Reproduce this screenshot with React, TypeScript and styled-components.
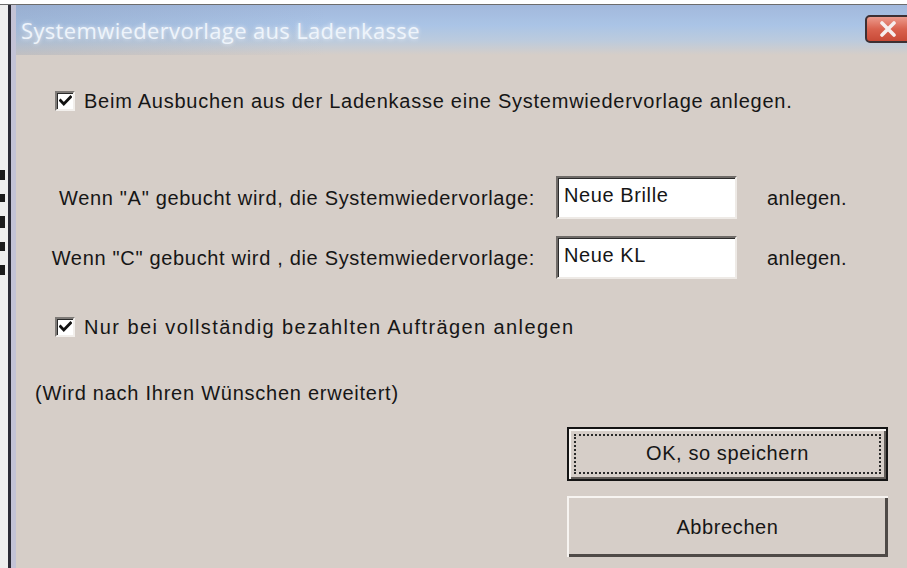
import React from "react";
import styled, { createGlobalStyle } from "styled-components";

const Global = createGlobalStyle`
  html, body {
    margin: 0;
    padding: 0;
    background: #ffffff;
    overflow: hidden;
  }
  #root {
    width: 907px;
    height: 568px;
  }
`;

const UI_FONT = `"Liberation Sans", Arial, sans-serif`;

const Screen = styled.div`
  width: 907px;
  height: 568px;
  display: flex;
  flex-direction: column;
  overflow: hidden;
  background: #f4f4f4;
`;

const TopStrip = styled.div`
  height: 4px;
  flex: none;
  background: #ffffff;
  border-bottom: 1px solid #6c6c6c;
`;

const Body = styled.div`
  flex: 1;
  display: flex;
  min-height: 0;
`;

const Backdrop = styled.div`
  width: 8px;
  flex: none;
  display: flex;
  flex-direction: column;
  background: #eeeeee;
  padding-top: 165px;
  gap: 14px;
`;

const Mark = styled.span<{ $h: number }>`
  display: block;
  width: 5px;
  height: ${(p) => p.$h}px;
  background: #1c1c1c;
`;

const Window = styled.div`
  flex: 1;
  display: flex;
  flex-direction: column;
  border-left: 3px solid #2a2a35;
  background: #d6cec8;
  min-width: 0;
`;

const Frame = styled.div`
  flex: 1;
  display: flex;
  flex-direction: column;
  border-left: 5px solid #c3c3d6;
  min-height: 0;
`;

const TitleBar = styled.div`
  height: 50px;
  flex: none;
  display: flex;
  align-items: flex-start;
  justify-content: space-between;
  background:
    linear-gradient(90deg, rgba(120, 140, 170, 0.22) 0%, rgba(255, 255, 255, 0) 35%, rgba(255, 255, 255, 0) 100%),
    linear-gradient(180deg, #a2b8dc 0%, #aac4e6 40%, #bccbdd 72%, #d6cec8 100%);
`;

const Title = styled.span`
  margin: 12px 0 0 5px;
  font-family: "Open Sans", "Noto Sans", sans-serif;
  font-size: 22px;
  line-height: 26px;
  color: #eef4fb;
  text-shadow: 0 0 4px rgba(255, 255, 255, 0.75);
  letter-spacing: 0.35px;
`;

const CloseButton = styled.div`
  margin-top: 10px;
  width: 46px;
  height: 28px;
  margin-right: -4px;
  border: 2px solid #3d3033;
  border-radius: 5px;
  background: linear-gradient(180deg, #ec9a8c 0%, #d9624f 50%, #c84a37 100%);
  display: flex;
  align-items: center;
  justify-content: center;
  box-sizing: border-box;
`;

const Content = styled.div`
  flex: 1;
  display: flex;
  flex-direction: column;
  font-family: ${UI_FONT};
  font-size: 20px;
  line-height: 22px;
  color: #161616;
`;

const CheckRow = styled.label<{ $top: number; $track: number }>`
  display: flex;
  align-items: center;
  gap: 9px;
  margin: ${(p) => p.$top}px 0 0 39px;
  height: 22px;
  letter-spacing: ${(p) => p.$track}px;
`;

const CheckBox = styled.span`
  width: 20px;
  height: 20px;
  box-sizing: border-box;
  flex: none;
  background: #ffffff;
  border-top: 2px solid #7e7a77;
  border-left: 2px solid #7e7a77;
  border-right: 2px solid #f2efec;
  border-bottom: 2px solid #f2efec;
  box-shadow: inset 1px 1px 0 #2a2a2a;
  display: flex;
  align-items: center;
  justify-content: center;
`;

const Fields = styled.div`
  display: grid;
  grid-template-columns: 519px 181px auto;
  row-gap: 17px;
  align-items: center;
  margin-top: 64px;
  letter-spacing: 0.68px;
`;

const FieldLabel = styled.span`
  text-align: right;
  white-space: nowrap;
`;

const TextBox = styled.div`
  grid-column: 2;
  height: 43px;
  margin-left: 21px;
  width: 181px;
  box-sizing: border-box;
  background: #ffffff;
  border-top: 2px solid #6f6b68;
  border-left: 2px solid #6f6b68;
  border-right: 2px solid #eeeae6;
  border-bottom: 2px solid #eeeae6;
  box-shadow: inset 1px 1px 0 #2b2b2b;
  padding: 0 0 6px 6px;
  display: flex;
  align-items: center;
  letter-spacing: 0.6px;
`;

const After = styled.span`
  margin-left: 51px;
  letter-spacing: 0.4px;
`;

const Note = styled.div`
  margin: 44px 0 0 19px;
  letter-spacing: 0.75px;
`;

const Buttons = styled.div`
  display: flex;
  flex-direction: column;
  align-items: flex-start;
  gap: 15px;
  margin: 23px 0 0 551px;
`;

const Button = styled.div<{ $default?: boolean }>`
  width: 321px;
  height: ${(p) => (p.$default ? 54 : 61)}px;
  box-sizing: border-box;
  background: #d6cec8;
  border: ${(p) => (p.$default ? "2px solid #141414" : "none")};
  box-shadow: ${(p) =>
    p.$default
      ? "inset 2px 2px 0 #f7f4f1, inset -2px -2px 0 #625d59"
      : "inset 2px 2px 0 #f7f4f1, inset -3px -3px 0 #4f4a47"};
  display: flex;
  align-items: center;
  justify-content: center;
  padding: ${(p) => (p.$default ? 5 : 0)}px;
  letter-spacing: 0.6px;
`;

const Focus = styled.div`
  flex: 1;
  align-self: stretch;
  border: 2px dotted #2a2a2a;
  display: flex;
  align-items: center;
  justify-content: center;
  padding-bottom: 3px;
`;

const Tick = () => (
  <svg width="13" height="12" viewBox="0 0 13 12">
    <path d="M1.5 5.5 L4.8 9 L11.5 2" fill="none" stroke="#111" strokeWidth="2.8" strokeLinecap="square" />
  </svg>
);

const CrossGlyph = () => (
  <svg width="20" height="16" viewBox="0 0 20 16">
    <path d="M4 2 L16 14 M16 2 L4 14" stroke="#f6eeee" strokeWidth="3.6" strokeLinecap="round" />
  </svg>
);

export default function App() {
  return (
    <>
      <Global />
      <Screen>
        <TopStrip />
        <Body>
          <Backdrop>
            <Mark $h={10} />
            <Mark $h={8} />
            <Mark $h={12} />
            <Mark $h={9} />
            <Mark $h={10} />
          </Backdrop>
          <Window>
            <Frame>
              <TitleBar>
                <Title>Systemwiedervorlage aus Ladenkasse</Title>
                <CloseButton>
                  <CrossGlyph />
                </CloseButton>
              </TitleBar>
              <Content>
                <CheckRow $top={35} $track={0.75}>
                  <CheckBox>
                    <Tick />
                  </CheckBox>
                  Beim Ausbuchen aus der Ladenkasse eine Systemwiedervorlage anlegen.
                </CheckRow>
                <Fields>
                  <FieldLabel>Wenn "A" gebucht wird, die Systemwiedervorlage:</FieldLabel>
                  <TextBox>Neue Brille</TextBox>
                  <After>anlegen.</After>
                  <FieldLabel>Wenn "C" gebucht wird , die Systemwiedervorlage:</FieldLabel>
                  <TextBox>Neue KL</TextBox>
                  <After>anlegen.</After>
                </Fields>
                <CheckRow $top={37} $track={1.4}>
                  <CheckBox>
                    <Tick />
                  </CheckBox>
                  Nur bei vollständig bezahlten Aufträgen anlegen
                </CheckRow>
                <Note>(Wird nach Ihren Wünschen erweitert)</Note>
                <Buttons>
                  <Button $default>
                    <Focus>OK, so speichern</Focus>
                  </Button>
                  <Button>Abbrechen</Button>
                </Buttons>
              </Content>
            </Frame>
          </Window>
        </Body>
      </Screen>
    </>
  );
}
